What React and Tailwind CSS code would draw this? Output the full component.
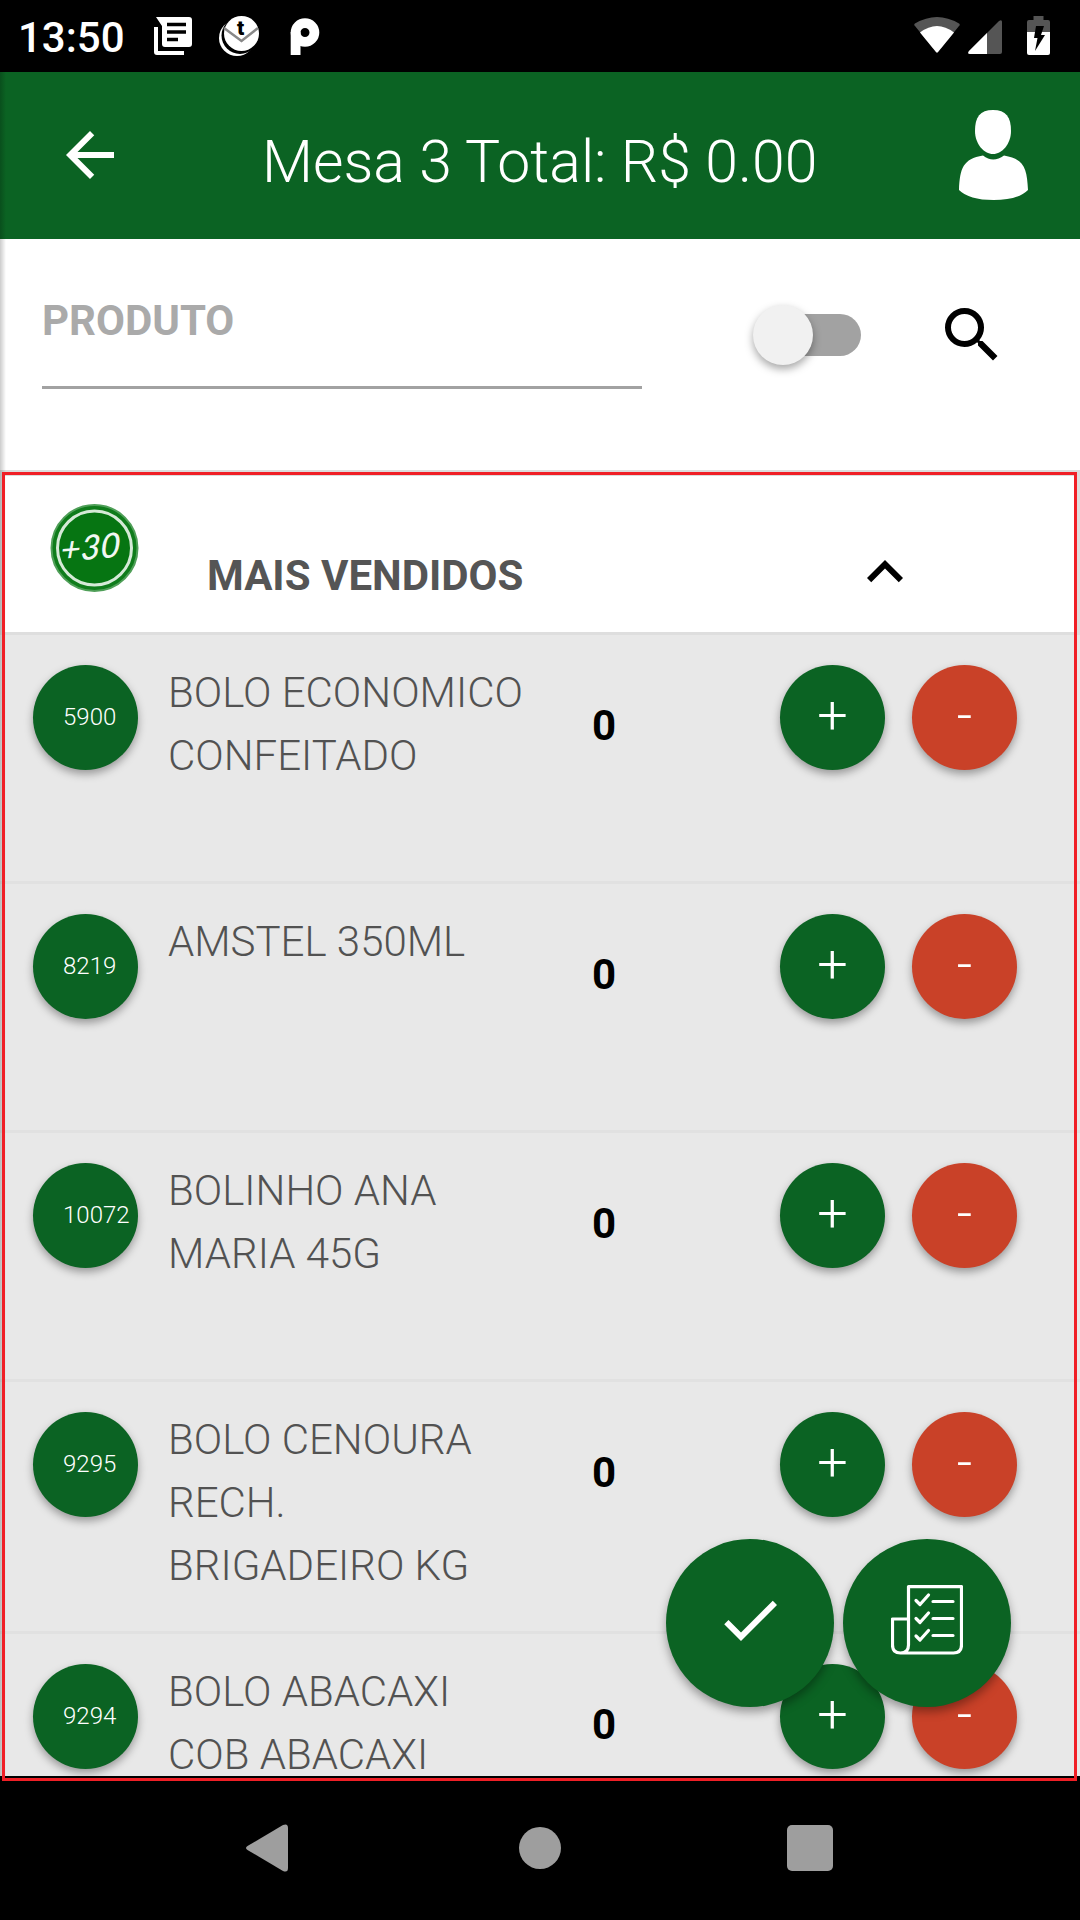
import { MdArrowBack, MdCheck, MdExpandLess, MdSearch } from "react-icons/md";

const products = [
  { code: "5900", name: "BOLO ECONOMICO CONFEITADO", quantity: 0 },
  { code: "8219", name: "AMSTEL 350ML", quantity: 0 },
  { code: "10072", name: "BOLINHO ANA MARIA 45G", quantity: 0 },
  { code: "9295", name: "BOLO CENOURA RECH. BRIGADEIRO KG", quantity: 0 },
  { code: "9294", name: "BOLO ABACAXI COB ABACAXI", quantity: 0 },
];

function StatusBar() {
  return (
    <div className="flex h-[72px] shrink-0 items-start bg-black text-white">
      <span className="ml-[18px] mt-[13px] w-[136px] text-[42px] font-medium leading-[49px]">
        13:50
      </span>
      <svg className="mt-[17px] h-[38px] w-[38px]" viewBox="0 0 38 38">
        <path d="M0 10h4v24h26v4H3q-3 0-3-3z" fill="#fff" />
        <path d="M2 0h33q3 0 3 3v24q0 3-3 3H11q-3 0-3-3V9z" fill="#fff" />
        <path d="M13 7.500h19M13 15h19M13 22.500h11" stroke="#000" strokeWidth="3.500" />
      </svg>
      <svg className="ml-[27px] mt-[16px] h-10 w-10" viewBox="0 0 40 40">
        <circle cx="18" cy="22" r="18" fill="#fff" />
        <circle cx="21" cy="19.500" r="18.500" fill="#000" />
        <circle cx="22.500" cy="17.500" r="17.500" fill="#fff" />
        <path d="M5 12l17.500 13L39 12" fill="none" stroke="#888" strokeWidth="2.500" />
        <text
          x="21.500"
          y="18.500"
          textAnchor="middle"
          fontSize="21"
          fontWeight="900"
          fill="#000"
        >
          t
        </text>
      </svg>
      <svg className="ml-[31px] mt-[18px] h-[37px] w-[30px]" viewBox="0 0 30 37">
        <circle cx="15" cy="14.500" r="9.400" fill="none" stroke="#fff" strokeWidth="9.800" />
        <rect x="0.700" y="14" width="9.800" height="23" fill="#fff" />
      </svg>
      <div className="ml-auto mr-[30px] mt-4 flex">
        <svg className="h-10 w-[46px]" viewBox="0 0 46 40">
          <path d="M1 10Q-.5 8.500 1 7.500 23-5.500 45 7.500q1.500 1 0 2.500L24 36q-1 1-2 0z" fill="#555" />
          <path d="M6 16.500q17-13 34 0L24 36q-1 1-2 0z" fill="#fff" />
        </svg>
        <svg className="ml-2 h-10 w-[35px]" viewBox="0 0 35 40">
          <path d="M1 35L31 5q3-2 3 1v30q0 2-2 2H2q-3 0-1-3z" fill="#555" />
          <path d="M1 35l18-18v21H2q-3 0-1-3z" fill="#fff" />
        </svg>
        <svg className="ml-6 h-10 w-[23px]" viewBox="0 0 23 40">
          <path d="M6.500 0h10v4H21q2 0 2 2v10H0V6q0-2 2-2h4.500z" fill="#555" />
          <path d="M0 16h23v21q0 2-2 2H2q-2 0-2-2z" fill="#fff" />
          <path d="M9 10h8l-3 9h4L8 35l2.500-13H7z" fill="#000" />
        </svg>
      </div>
    </div>
  );
}

function Header() {
  return (
    <header className="flex h-[167px] shrink-0 items-start bg-[#0b6323] text-white">
      <MdArrowBack className="ml-[54px] mt-[47px] size-[72px]" />
      <h1 className="ml-[136px] mt-[55px] w-[602px] text-[58.9px] font-light leading-[70px]">
        Mesa 3 Total: R$ 0.00
      </h1>
      <svg className="ml-[95px] mt-[38px] h-[90px] w-[69px]" viewBox="0 0 69 90" fill="#fff">
        <path d="M34 0C47 0 52 7 52 21 52 34 43 44 34 44S16 34 16 21C16 7 21 0 34 0z" />
        <path d="M24 45.500q10 8 21 0C65 49 68 58 69 80q-10 10-34.500 10T0 80C1 58 4 49 24 45.500z" />
      </svg>
    </header>
  );
}

function SearchBar() {
  return (
    <section className="flex h-[231px] shrink-0 items-start bg-white">
      <div className="ml-[42px] mt-[57px] h-[93px] w-[600px] border-b-3 border-[#a2a2a2] text-[42px] font-bold leading-[49px] text-[#aaaaaa]">
        PRODUTO
      </div>
      <div className="ml-[117px] mt-[75px] h-[42px] w-[102px] rounded-full bg-[#a2a2a2]">
        <div className="-ml-1.5 -mt-[9px] inline-block size-[60px] rounded-full bg-[#f1f1f1] shadow-[0_4px_8px_rgba(0,0,0,0.35)]" />
      </div>
      <MdSearch className="ml-[75px] mt-[60px] size-[72px]" />
    </section>
  );
}

function BestSellersBadge() {
  return (
    <svg className="ml-[46px] mt-[31px] size-[90px]" viewBox="0 0 90 90">
      <circle cx="45.500" cy="45" r="43" fill="#0f7c1b" stroke="#4f9f58" strokeWidth="2" />
      <circle cx="45.500" cy="45" r="37" fill="#067512" stroke="#d5ead7" strokeWidth="3" />
      <text
        x="42"
        y="56"
        textAnchor="middle"
        textLength="60"
        lengthAdjust="spacingAndGlyphs"
        transform="rotate(-5 45 45) skewX(-8) translate(6 0)"
        className="font-['Lato',sans-serif] text-[34px] font-medium italic"
        fill="#f2f8f2"
      >
        +30
      </text>
    </svg>
  );
}

function CategoryHeader() {
  return (
    <div className="flex h-[163px] items-start border-x-3 border-b-3 border-[#dedede] bg-white">
      <BestSellersBadge />
      <h2 className="ml-[68px] mt-[79px] w-[400px] text-[42px] font-bold leading-[49px] text-[#555555]">
        MAIS VENDIDOS
      </h2>
      <MdExpandLess className="ml-[242px] mt-16 size-[72px]" />
    </div>
  );
}

function ProductRow({ code, name, quantity }) {
  return (
    <li className="flex min-h-[249px] items-start border-b-3 border-[#e1e1e1] pb-[34px] pt-[26px]">
      <div className="ml-[33px] mt-1 size-[105px] shrink-0 rounded-full bg-[#0b6323] pl-[30px] text-2xl font-light leading-[105px] text-white shadow-[0_4px_8px_rgba(0,0,0,0.35)]">
        {code}
      </div>
      <p className="ml-[30px] w-[360px] text-[42px] font-light leading-[63px] text-[#525252]">
        {name}
      </p>
      <span className="ml-16 mt-[33px] w-[188px] text-[42px] font-bold leading-[63px] text-black">
        {quantity}
      </span>
      <button className="mt-1 size-[105px] rounded-full bg-[#0b6323] pb-1 text-[54px] font-light leading-none text-white shadow-[0_4px_8px_rgba(0,0,0,0.35)]">
        +
      </button>
      <button className="ml-[27px] mt-1 size-[105px] rounded-full bg-[#c94128] pb-1 text-[54px] font-light leading-none text-white shadow-[0_4px_8px_rgba(0,0,0,0.35)]">
        -
      </button>
    </li>
  );
}

function ChecklistIcon() {
  return (
    <svg
      className="mt-0.5 size-[72px]"
      viewBox="0 0 72 72"
      fill="none"
      stroke="#fff"
      strokeWidth="3.2"
      strokeLinecap="round"
      strokeLinejoin="round"
    >
      <path d="M17.500 60V1.600h53V60q0 8-8 8H9.500q-8 0-8-8V34h16M17.500 60q0 8-8 8" />
      <path d="M25 15.500l4 4 8.500-9.500M25 33.500l4 4 8.500-9.500M25 51l4 4 8.500-9.500M42 16.500h20M42 33.500h20M42 50.500h20" />
    </svg>
  );
}

function NavigationBar() {
  return (
    <nav className="flex h-36 shrink-0 items-center bg-black">
      <svg className="ml-[246px] h-12 w-[42px]" viewBox="0 0 42 48" fill="#9e9e9e">
        <path d="M1.500 22L37 1q5-2 5 3v40q0 5-5 3L1.500 26q-3-2 0-4z" />
      </svg>
      <div className="ml-[231px] size-[42px] rounded-full bg-[#9e9e9e]" />
      <div className="ml-[226px] size-[46px] rounded-[5px] bg-[#9e9e9e]" />
    </nav>
  );
}

export default function App() {
  return (
    <div className="relative flex h-[1920px] w-[1080px] flex-col overflow-hidden bg-black font-['Roboto',sans-serif]">
      <StatusBar />
      <Header />
      <SearchBar />
      <main className="h-[1306px] shrink-0 overflow-hidden border-t-6 border-[#dcdcdc] bg-[#e8e8e8]">
        <div className="-mt-1">
          <CategoryHeader />
          <ul>
            {products.map((product) => (
              <ProductRow key={product.code} {...product} />
            ))}
          </ul>
        </div>
      </main>
      <NavigationBar />

      {/* drawer shadow along the left edge */}
      <div className="absolute bottom-36 left-0 top-[72px] w-1.5 bg-linear-to-r from-black/20 to-transparent" />

      <div className="absolute left-[666px] top-[1539px] flex gap-[9px] text-white">
        <button className="flex size-[168px] items-center justify-center rounded-full bg-[#0b6323] pb-1.5 shadow-[0_5px_10px_rgba(0,0,0,0.35)]">
          <MdCheck className="size-[72px]" />
        </button>
        <button className="flex size-[168px] items-center justify-center rounded-full bg-[#0b6323] pb-1.5 shadow-[0_5px_10px_rgba(0,0,0,0.35)]">
          <ChecklistIcon />
        </button>
      </div>

      <div className="absolute left-0.5 top-[472px] h-[1309px] w-[1075px] border-3 border-[#f01f26]" />
    </div>
  );
}
